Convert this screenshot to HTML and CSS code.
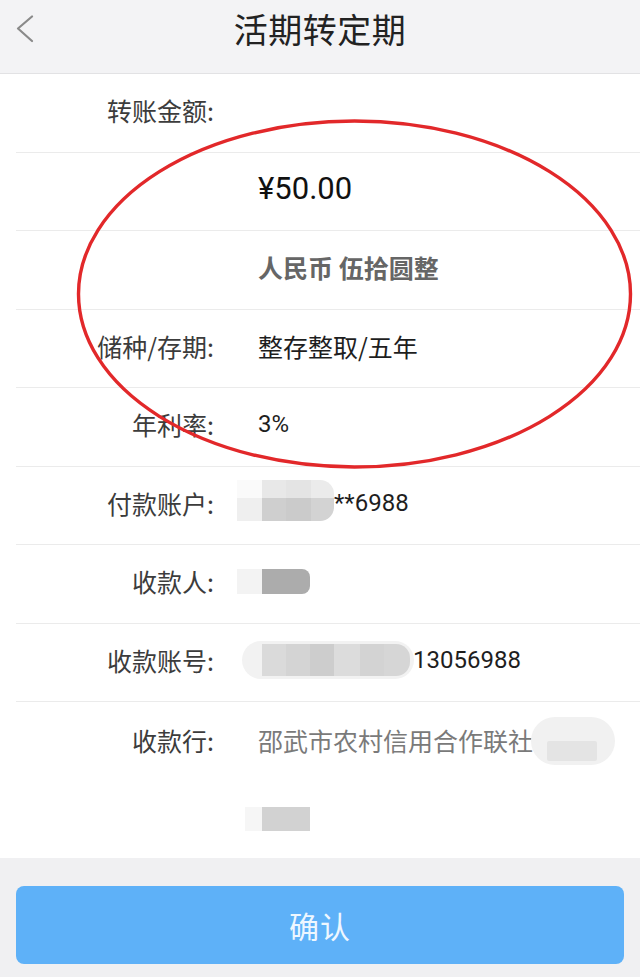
FILE: index.html
```html
<!DOCTYPE html>
<html lang="zh-CN">
<head>
<meta charset="utf-8">
<title>活期转定期</title>
<link rel="stylesheet" href="styles.css">
</head>
<body>
<div class="page">
  <header class="topbar">
    <div class="topbar-left">
      <svg class="back" width="18" height="28" viewBox="0 0 18 28"><path d="M16 1.5 L2 13.5 L16 26" fill="none" stroke="#8a8a8a" stroke-width="2.2" stroke-linecap="round" stroke-linejoin="round"/></svg>
    </div>
    <h1 class="title">活期转定期</h1>
    <div class="topbar-right"></div>
  </header>

  <main class="list">
    <div class="row"><span class="label">转账金额:</span><span class="value"></span></div>
    <div class="row"><span class="label"></span><span class="value amount">¥50.00</span></div>
    <div class="row"><span class="label"></span><span class="value words">人民币 伍拾圆整</span></div>
    <div class="row"><span class="label">储种/存期:</span><span class="value cjk">整存整取/五年</span></div>
    <div class="row"><span class="label">年利率:</span><span class="value">3%</span></div>
    <div class="row">
      <span class="label">付款账户:</span>
      <span class="value">
        <span class="mosaic m-pay">
          <i class="c1"></i><i class="c2"></i><i class="c3"></i><i class="c4"></i>
          <i class="c5"></i><i class="c6"></i><i class="c7"></i><i class="c8"></i>
        </span>**6988
      </span>
    </div>
    <div class="row">
      <span class="label">收款人:</span>
      <span class="value"><span class="mosaic m-name"><i class="c1"></i><i class="c2"></i></span></span>
    </div>
    <div class="row">
      <span class="label">收款账号:</span>
      <span class="value">
        <span class="mosaic m-acct"><i></i><i></i><i></i><i></i><i></i><i></i></span>13056988
      </span>
    </div>
    <div class="row row-bank">
      <span class="label">收款行:</span>
      <span class="value bank">
        <span class="bank-line">邵武市农村信用合作联社<span class="mosaic m-bank"><i></i></span></span>
        <span class="bank-line"><span class="mosaic m-bank2"><i class="c1"></i><i class="c2"></i></span></span>
      </span>
    </div>
  </main>

  <footer class="actions">
    <button class="confirm" type="button">确认</button>
  </footer>

  <svg class="annotation" width="640" height="977" viewBox="0 0 640 977">
    <ellipse cx="354.5" cy="294" rx="276" ry="173" fill="none" stroke="#e2282a" stroke-width="3.4"/>
  </svg>
</div>
</body>
</html>
```

FILE: styles.css
```css
* { box-sizing: border-box; }

html, body {
  margin: 0;
  padding: 0;
  background: #f0f0f2;
}

body {
  font-family: Roboto, "Noto Sans CJK SC", "Noto Sans", sans-serif;
  color: #222;
}

.page {
  position: relative;
  width: 640px;
  height: 977px;
  overflow: hidden;
  display: flex;
  flex-direction: column;
}

/* Header */
.topbar {
  height: 74px;
  padding-bottom: 16px;
  background: #f3f3f5;
  border-bottom: 1px solid #e2e2e4;
  display: grid;
  grid-template-columns: 1fr auto 1fr;
  align-items: center;
}

.topbar-left {
  padding-left: 16px;
  display: flex;
  align-items: center;
}

.back { display: block; }

.title {
  margin: 0;
  font-family: "Noto Sans CJK SC", sans-serif;
  font-size: 34px;
  font-weight: 400;
  color: #222;
  letter-spacing: 0.5px;
}

/* List */
.list {
  background: #fff;
}

.row {
  margin-left: 16px;
  height: 78.5px;
  padding-bottom: 5px;
  border-bottom: 1px solid #ebebeb;
  display: grid;
  grid-template-columns: 198px 1fr;
  column-gap: 44px;
  align-items: center;
}

.row:last-child { border-bottom: none; }

.label {
  text-align: right;
  font-family: "Noto Sans CJK SC", sans-serif;
  font-size: 25px;
  color: #3c3c3c;
  white-space: nowrap;
}

.value {
  font-size: 24px;
  color: #1e1e1e;
  white-space: nowrap;
  display: flex;
  align-items: center;
}

.cjk {
  font-family: "Noto Sans CJK SC", sans-serif;
  font-size: 25px;
}

.amount {
  font-size: 31px;
  color: #111;
}

.words {
  font-family: "Noto Sans CJK SC", sans-serif;
  font-size: 25px;
  font-weight: 700;
  color: #666;
}

.row-bank {
  height: 156px;
  padding-bottom: 0;
  align-items: start;
}

.row-bank .label {
  height: 76px;
  line-height: 76px;
}

.bank {
  flex-direction: column;
  align-items: flex-start;
  color: #7a7a7a;
  font-family: "Noto Sans CJK SC", sans-serif;
  font-size: 25px;
}

.bank-line {
  height: 76px;
  display: flex;
  align-items: center;
}

.bank-line + .bank-line { height: 82px; }

/* Mosaic (redacted) blocks */
.mosaic {
  display: inline-grid;
  flex: none;
}

.mosaic i { display: block; }

.m-pay {
  margin-left: -21px;
  margin-top: -4px;
  grid-template-columns: 25px 24px 25px 23px;
  grid-template-rows: 18px 23px;
}
.m-pay .c1 { background: #fafafa; }
.m-pay .c2 { background: #e8e8e8; }
.m-pay .c3 { background: #e4e4e4; }
.m-pay .c4 { background: #ebebeb; border-top-right-radius: 14px; }
.m-pay .c5 { background: #efefef; }
.m-pay .c6 { background: #cfcfcf; }
.m-pay .c7 { background: #cbcbcb; }
.m-pay .c8 { background: #d3d3d3; border-bottom-right-radius: 14px; }

.m-name {
  margin-left: -21px;
  grid-template-columns: 25px 48px;
  grid-template-rows: 25px;
}
.m-name .c1 { background: #f3f3f3; }
.m-name .c2 { background: #acacac; border-radius: 0 8px 8px 0; }

.m-acct {
  margin-left: -16px;
  height: 38px;
  padding: 3px 4px 3px 20px;
  background: #f2f2f2;
  border-radius: 19px;
  grid-template-columns: 24px 24px 24px 26px 24px 26px;
  margin-right: -1px;
}
.m-acct i:nth-child(1) { background: #dadada; }
.m-acct i:nth-child(2) { background: #d4d4d4; }
.m-acct i:nth-child(3) { background: #cdcdcd; }
.m-acct i:nth-child(4) { background: #dcdcdc; }
.m-acct i:nth-child(5) { background: #d3d3d3; }
.m-acct i:nth-child(6) { background: #d6d6d6; border-radius: 0 14px 14px 0; }

.m-bank {
  width: 84px;
  height: 48px;
  margin-left: -2px;
  margin-top: 2px;
  background: #f1f1f1;
  border-radius: 24px;
  padding: 24px 18px 4px 16px;
}
.m-bank i { background: #e4e4e4; border-radius: 2px; }

.m-bank2 {
  margin-left: -13px;
  grid-template-columns: 17px 48px;
  grid-template-rows: 24px;
}
.m-bank2 .c1 { background: #f6f6f6; }
.m-bank2 .c2 { background: #d2d2d2; }

/* Footer */
.actions {
  flex: 1;
  background: #f0f0f2;
  padding: 28px 16px 0;
}

.confirm {
  display: block;
  width: 100%;
  height: 78px;
  border: none;
  border-radius: 8px;
  background: #5eb1f8;
  color: #eef7ff;
  font-family: "Noto Sans CJK SC", sans-serif;
  font-size: 30px;
  letter-spacing: 1px;
}

/* Hand-drawn annotation over the content */
.annotation {
  position: absolute;
  left: 0;
  top: 0;
  pointer-events: none;
}
```
